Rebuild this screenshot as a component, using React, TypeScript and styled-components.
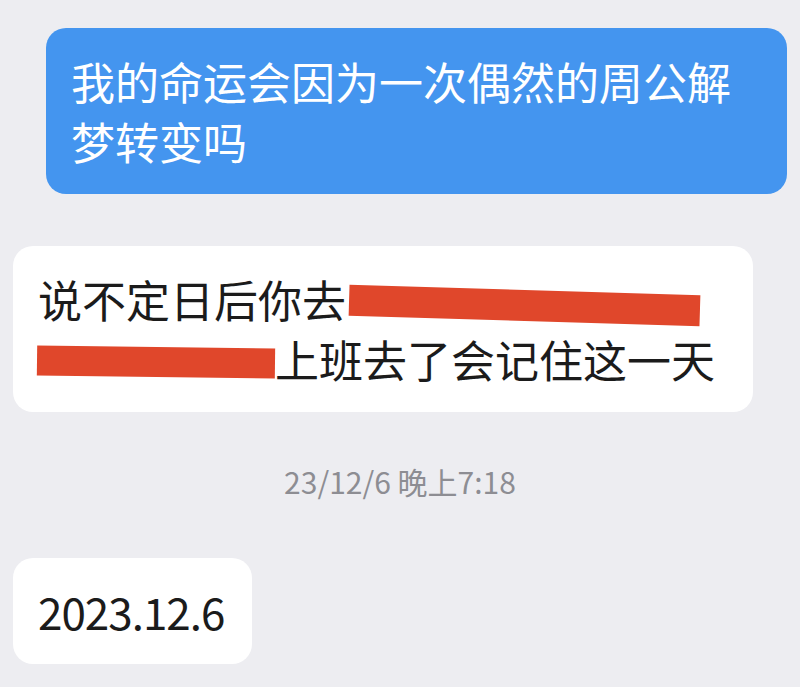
import React from "react";
import styled, { createGlobalStyle, css } from "styled-components";

const GlobalStyle = createGlobalStyle`
  html, body {
    margin: 0;
    padding: 0;
    background: #ededf1;
  }
  body {
    font-family: "Noto Sans CJK SC", "Noto Sans", sans-serif;
  }
`;

const Chat = styled.main`
  display: flex;
  flex-direction: column;
  padding-top: 28px;
  min-height: 687px;
  box-sizing: border-box;
`;

const Bubble = styled.div<{ $mine?: boolean; $gap?: number; $tight?: boolean }>`
  box-sizing: border-box;
  padding: 23px 25px;
  border-radius: 20px;
  font-size: 44px;
  line-height: 60px;
  margin-top: ${(p) => p.$gap ?? 0}px;
  letter-spacing: ${(p) => (p.$tight ? "-1px" : "0")};
  ${(p) =>
    p.$mine
      ? css`
          align-self: flex-end;
          margin-left: 46px;
          margin-right: 13px;
          background: #4495ef;
          color: #ffffff;
        `
      : css`
          align-self: flex-start;
          margin-left: 13px;
          margin-right: 47px;
          background: #ffffff;
          color: #1b1b1b;
        `}
  ${(p) =>
    p.$tight &&
    css`
      padding-right: 28px;
    `}
`;

const Redacted = styled.span<{ $w: number }>`
  position: relative;
  display: inline-block;
  vertical-align: top;
  width: ${(p) => p.$w}px;
  height: 60px;
`;

const Bar = styled.span<{ $left: number; $top: number; $w: number; $h: number; $rot: number }>`
  position: absolute;
  left: ${(p) => p.$left}px;
  top: ${(p) => p.$top}px;
  width: ${(p) => p.$w}px;
  height: ${(p) => p.$h}px;
  background: #e0472b;
  transform: rotate(${(p) => p.$rot}deg);
  transform-origin: center;
`;

const Timestamp = styled.div`
  margin-top: 49px;
  text-align: center;
  font-size: 30px;
  line-height: 40px;
  color: #8d8d93;
`;

export default function App() {
  return (
    <>
      <GlobalStyle />
      <Chat>
        <Bubble $mine>我的命运会因为一次偶然的周公解梦转变吗</Bubble>
        <Bubble $gap={52}>
          说不定日后你去
          <Redacted $w={356} aria-label="已遮挡">
            <Bar $left={3} $top={21} $w={351} $h={31} $rot={1.7} />
          </Redacted>
          <Redacted $w={237} aria-label="已遮挡">
            <Bar $left={-1} $top={18} $w={238} $h={30} $rot={0.7} />
          </Redacted>
          上班去了会记住这一天
        </Bubble>
        <Timestamp>23/12/6 晚上7:18</Timestamp>
        <Bubble $gap={57} $tight>
          2023.12.6
        </Bubble>
      </Chat>
    </>
  );
}
